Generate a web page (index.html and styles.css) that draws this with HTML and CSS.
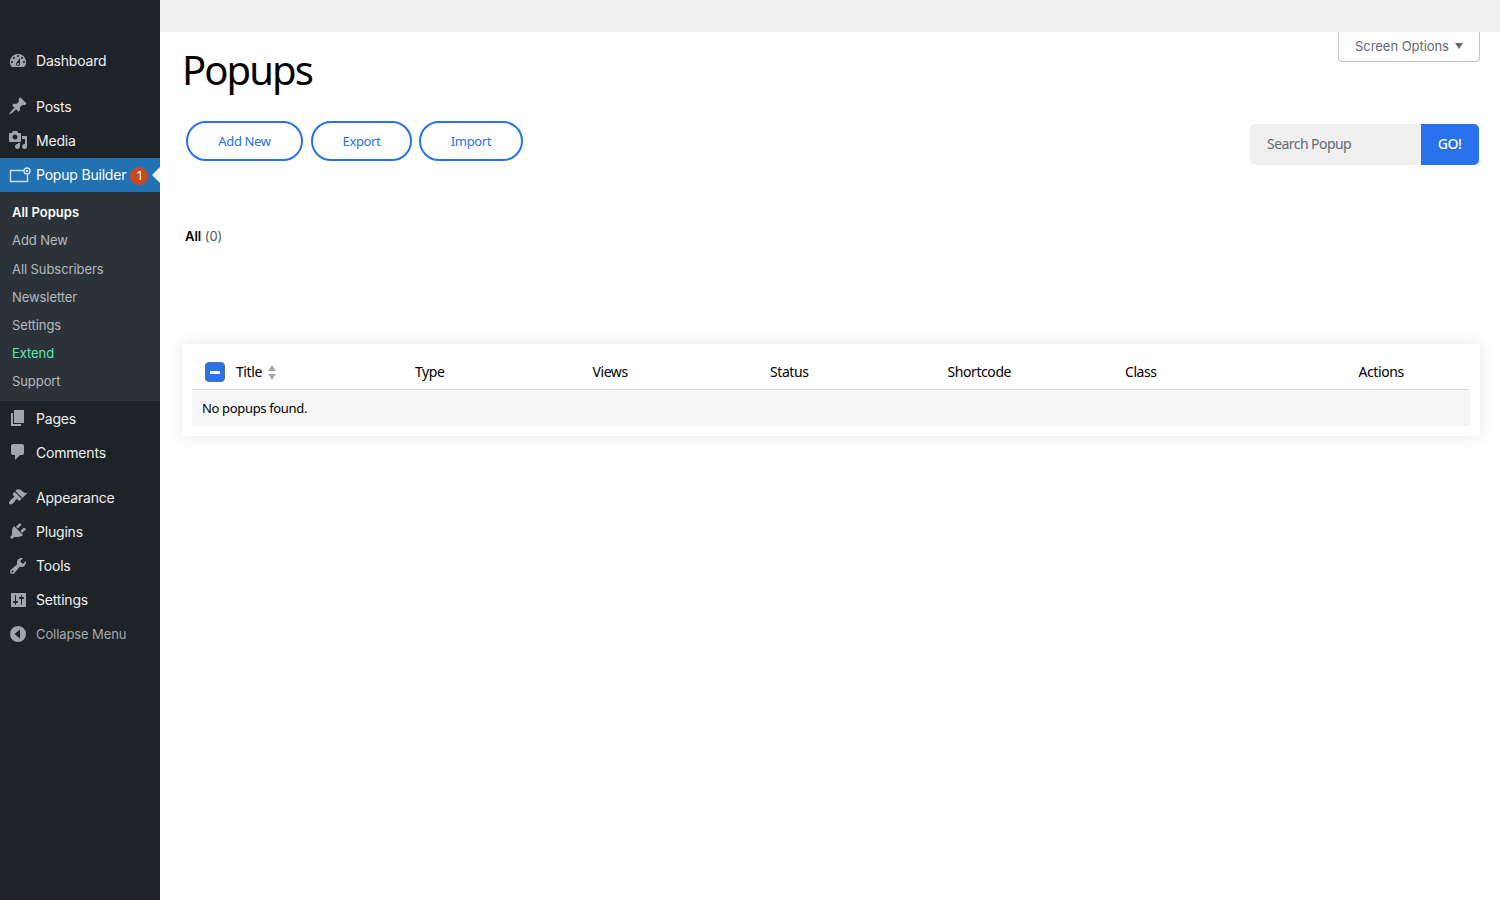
FILE: index.html
```html
<!DOCTYPE html>
<html lang="en">
<head>
<meta charset="utf-8">
<title>Popups</title>
<link rel="stylesheet" href="styles.css">
</head>
<body>
<div class="app">
<nav class="sidebar">
  <a class="item"><svg class="icon" viewBox="0 0 20 20"><path d="M3.76 16h12.48A7.998 7.998 0 0 0 10 3a7.998 7.998 0 0 0-6.24 13zM10 4c.55 0 1 .45 1 1s-.45 1-1 1-1-.45-1-1 .45-1 1-1zM6 6c.55 0 1 .45 1 1s-.45 1-1 1-1-.45-1-1 .45-1 1-1zm8 0c.55 0 1 .45 1 1s-.45 1-1 1-1-.45-1-1 .45-1 1-1zm-5.37 5.55L12 7v6c0 1.1-.9 2-2 2s-2-.9-2-2c0-.57.24-1.08.63-1.45zM4 10c.55 0 1 .45 1 1s-.45 1-1 1-1-.45-1-1 .45-1 1-1zm12 0c.55 0 1 .45 1 1s-.45 1-1 1-1-.45-1-1 .45-1 1-1zm-5 3c0-.55-.45-1-1-1s-1 .45-1 1 .45 1 1 1 1-.45 1-1z"/></svg><span class="label">Dashboard</span></a>
  <a class="item spaced"><svg class="icon" viewBox="0 0 20 20"><path d="M10.44 3.02l1.82-1.82 6.36 6.35-1.83 1.82c-1.05-.68-2.48-.57-3.41.36l-.75.75c-.92.93-1.04 2.35-.35 3.41l-1.83 1.82-2.41-2.41-2.8 2.79c-.42.42-3.38 2.71-3.8 2.29s1.86-3.39 2.28-3.81l2.79-2.79L4.1 9.36l1.83-1.82c1.05.69 2.48.57 3.4-.36l.75-.75c.93-.92 1.05-2.35.36-3.41z"/></svg><span class="label">Posts</span></a>
  <a class="item"><svg class="icon" viewBox="0 0 20 20"><path d="M13 11V4c0-.55-.45-1-1-1h-1.67L9 1H5L3.67 3H2c-.55 0-1 .45-1 1v7c0 .55.45 1 1 1h10c.55 0 1-.45 1-1zM7 4.5c1.38 0 2.5 1.12 2.5 2.5S8.38 9.5 7 9.5 4.5 8.38 4.5 7 5.62 4.5 7 4.5zM14 6h5v10.5c0 1.38-1.12 2.5-2.5 2.5S14 17.88 14 16.5s1.12-2.5 2.5-2.5c.17 0 .34.02.5.05V9h-3V6zm-4 8.05V13h2v3.5c0 1.38-1.12 2.5-2.5 2.5S7 17.88 7 16.5 8.12 14 9.5 14c.17 0 .34.02.5.05z"/></svg><span class="label">Media</span></a>
  <a class="item current"><svg class="icon builder" viewBox="0 0 22 16"><path d="M15 3.5H1.5v11h17V8" fill="none" stroke="currentColor" stroke-width="1.4"/><circle cx="18" cy="4" r="3" fill="none" stroke="currentColor" stroke-width="1.4"/><path d="M16.8 2.8l2.4 2.4m0-2.4l-2.4 2.4" stroke="currentColor"/></svg><span class="label">Popup Builder</span><span class="badge">1</span></a>
  <div class="submenu">
    <a class="sub active">All Popups</a>
    <a class="sub">Add New</a>
    <a class="sub">All Subscribers</a>
    <a class="sub">Newsletter</a>
    <a class="sub">Settings</a>
    <a class="sub extend">Extend</a>
    <a class="sub">Support</a>
  </div>
  <a class="item"><svg class="icon" viewBox="0 0 20 20"><path d="M6 15V2h10v13H6zm-1 1h8v2H3V5h2v11z"/></svg><span class="label">Pages</span></a>
  <a class="item"><svg class="icon" viewBox="0 0 20 20"><path d="M5 2h9c1.1 0 2 .9 2 2v7c0 1.1-.9 2-2 2h-2l-5 5v-5H5c-1.1 0-2-.9-2-2V4c0-1.1.9-2 2-2z"/></svg><span class="label">Comments</span></a>
  <a class="item spaced-late"><svg class="icon" viewBox="0 0 20 20"><path d="M14.48 11.06L7.41 3.99l1.5-1.5c.5-.56 2.3-.47 3.51.32 1.21.8 1.43 1.28 2.91 2.1 1.18.64 2.45 1.26 4.45.85zm-.71.71L6.7 4.7 4.93 6.47c-.39.39-.39 1.02 0 1.41l1.06 1.06c.39.39.39 1.03 0 1.42-.6.6-1.43 1.11-2.21 1.69-.35.26-.7.53-1.01.84C1.43 14.23.4 16.08 1.4 17.07c.99 1 2.84-.03 4.18-1.36.31-.31.58-.66.85-1.02.57-.78 1.08-1.61 1.69-2.21.39-.39 1.02-.39 1.41 0l1.06 1.06c.39.39 1.02.39 1.41 0z"/></svg><span class="label">Appearance</span></a>
  <a class="item"><svg class="icon" viewBox="0 0 20 20"><path d="M13.11 4.36L9.87 7.6 8 5.73l3.24-3.24c.35-.34 1.05-.2 1.56.32.52.51.66 1.21.31 1.55zm-8 1.77l.91-1.12 9.01 9.01-1.19.84c-.71.71-2.63 1.16-3.82 1.16H6.14L4.9 17.26c-.59.59-1.54.59-2.12 0-.59-.58-.59-1.53 0-2.12l1.24-1.24v-3.88c0-1.13.4-3.19 1.09-3.89zm7.26 3.97l3.24-3.24c.34-.35 1.04-.21 1.55.31.52.51.66 1.21.31 1.55l-3.24 3.25z"/></svg><span class="label">Plugins</span></a>
  <a class="item"><svg class="icon" viewBox="0 0 20 20"><path d="M16.68 9.77c-1.34 1.34-3.3 1.67-4.95.99l-5.41 6.52c-.99.99-2.59.99-3.58 0s-.99-2.59 0-3.57l6.52-5.42c-.68-1.65-.35-3.61.99-4.95 1.28-1.28 3.12-1.62 4.72-1.06l-2.89 2.89 2.82 2.82 2.86-2.87c.53 1.58.18 3.39-1.08 4.65zM3.81 16.21c.4.39 1.04.39 1.43 0 .4-.4.4-1.04 0-1.43-.39-.4-1.03-.4-1.43 0-.39.39-.39 1.03 0 1.43z"/></svg><span class="label">Tools</span></a>
  <a class="item"><svg class="icon" viewBox="0 0 20 20"><path d="M18 16V4c0-.55-.45-1-1-1H4c-.55 0-1 .45-1 1v12c0 .55.45 1 1 1h13c.55 0 1-.45 1-1zM8 11h1c.55 0 1 .45 1 1s-.45 1-1 1H8v1.5c0 .28-.22.5-.5.5s-.5-.22-.5-.5V13H6c-.55 0-1-.45-1-1s.45-1 1-1h1V5.5c0-.28.22-.5.5-.5s.5.22.5.5V11zm5-2h-1c-.55 0-1-.45-1-1s.45-1 1-1h1V5.5c0-.28.22-.5.5-.5s.5.22.5.5V7h1c.55 0 1 .45 1 1s-.45 1-1 1h-1v5.5c0 .28-.22.5-.5.5s-.5-.22-.5-.5V9z"/></svg><span class="label">Settings</span></a>
  <a class="item collapse"><svg class="icon" viewBox="0 0 20 20"><path fill-rule="evenodd" d="M10 2a8 8 0 1 0 0 16a8 8 0 1 0 0-16zM12 5.5v9L6.5 10z"/></svg><span class="label">Collapse Menu</span></a>
</nav>
<main class="main">
  <div class="topbar"></div>
  <div class="content">
    <header class="head">
      <h1 class="title">Popups</h1>
      <button class="screen-options">Screen Options <svg class="caret" viewBox="0 0 8 6"><path d="M0 0h8L4 6z"/></svg></button>
    </header>
    <div class="toolbar">
      <div class="actions">
        <button class="pill add">Add New</button>
        <button class="pill export">Export</button>
        <button class="pill import">Import</button>
      </div>
      <form class="search"><span class="field">Search Popup</span><span class="go">GO!</span></form>
    </div>
    <div class="filter"><b>All</b> <span>(0)</span></div>
    <section class="card">
      <div class="row">
        <div class="cell first"><span class="check"></span><span>Title</span><svg class="sort" viewBox="0 0 8 15"><path d="M0 6h8L4 0zM0 9h8l-4 6z"/></svg></div>
        <div class="cell">Type</div>
        <div class="cell">Views</div>
        <div class="cell">Status</div>
        <div class="cell">Shortcode</div>
        <div class="cell">Class</div>
        <div class="cell last">Actions</div>
      </div>
      <div class="empty">No popups found.</div>
    </section>
  </div>
</main>
</div>
</body>
</html>
```
FILE: styles.css
```css
* { box-sizing: border-box; }
body { margin: 0; font-family: "Noto Sans", "Open Sans", sans-serif; color: #000; background: #fff; }
button { font-family: inherit; }
.app { display: flex; height: 900px; overflow: hidden; }

.sidebar { width: 160px; flex: none; padding-top: 43.4px; background: #1d2327; font-family: Inter, sans-serif; border-bottom: 1px solid #241e24; }
.item { position: relative; display: flex; align-items: center; height: 34.3px; padding-left: 8px; color: #f0f0f1; font-size: 14px; letter-spacing: -0.2px; white-space: nowrap; }
.spaced { margin-top: 11.2px; }
.spaced-late { margin-top: 10.5px; }
.icon { width: 20px; height: 20px; margin-right: 8px; flex: none; fill: #a0a5aa; }
.current { height: 34px; margin-top: 0.4px; background: #2271b1; color: #fff; }
.current::after { content: ""; position: absolute; right: 0; top: 9px; border: 8px solid transparent; border-left-width: 0; border-right-color: #f0f0f1; }
.builder { width: 22px; height: 16px; margin: 0 5px 0 1px; color: #c9e0ff; }
.badge { width: 18px; height: 18px; margin: 2px 0 0 4px; border-radius: 50%; background: #ca4a1f; font-size: 12px; line-height: 18px; text-align: center; }
.submenu { height: 209px; padding-top: 6.4px; background: #2c3338; }
.sub { display: flex; align-items: center; height: 28.15px; padding-left: 12px; color: #b4b9be; font-size: 13px; letter-spacing: -0.08px; }
.active { color: #fff; font-weight: 600; letter-spacing: 0; }
.extend { color: #5ce8b5; }
.collapse { color: #a7aaad; font-size: 13px; letter-spacing: -0.1px; }

.main { flex: 1; min-width: 0; }
.topbar { height: 32px; background: #f0f0f0; }
.content { padding: 0 20px 0 22px; }
.head { display: flex; justify-content: space-between; align-items: flex-start; height: 89px; }
.title { margin: 10px 0 0; font-size: 40px; line-height: 56px; font-weight: 400; letter-spacing: -1.9px; }
.screen-options { display: flex; align-items: center; justify-content: center; gap: 6px; width: 142px; height: 30px; padding: 0 0 1px; background: #fff; border: 1px solid #c3c4c7; border-top: 0; border-radius: 0 0 4px 4px; color: #646970; font: 13px Inter, sans-serif; letter-spacing: -0.05px; }
.caret { width: 8px; height: 6px; fill: #646970; }
.toolbar { display: flex; justify-content: space-between; height: 105px; padding: 0 1px 0 4px; }
.actions { display: flex; gap: 8px; }
.pill { height: 40px; padding: 0; border: 2px solid #2872e8; border-radius: 20px; background: #fff; color: #2872e8; font-size: 13px; letter-spacing: -0.35px; }
.add { width: 117px; }
.export { width: 101px; }
.import { width: 104px; margin-left: -1px; }
.search { display: flex; height: 41px; margin-top: 3px; border-radius: 5px; overflow: hidden; line-height: 40px; font-size: 14px; }
.field { width: 171px; padding-left: 17px; background: #f0f0f0; color: #646970; letter-spacing: -0.55px; }
.go { width: 58px; padding-right: 1px; background: #2872eb; color: #fff; text-align: center; letter-spacing: -0.5px; font-weight: 500; }
.filter { height: 118px; padding-left: 3px; font: 13px/20px Inter, sans-serif; letter-spacing: -0.05px; color: #50575e; }
.filter b { color: #000; font-weight: 600; }
.card { height: 92px; padding: 10px; background: #fff; box-shadow: 0 0 15px rgba(0, 0, 0, 0.1); }
.row { display: grid; grid-template-columns: 213px repeat(4, 177.5px) 233.5px 1fr; height: 36px; border-bottom: 1px solid #dcdee0; font-size: 14px; letter-spacing: -0.42px; line-height: 36px; }
.cell { padding-left: 10px; }
.first { display: flex; align-items: center; padding-left: 13px; }
.check { display: flex; align-items: center; justify-content: center; width: 20px; height: 20px; margin-right: 11px; background: #2872eb; border: 1px solid #5b7085; border-radius: 4px; }
.check::after { content: ""; width: 10px; height: 3px; background: #fff; }
.sort { width: 8px; height: 15px; margin-left: 6px; fill: #a7aaad; }
.empty { height: 36px; padding-left: 10px; background: #f6f6f6; font-size: 13px; line-height: 36px; letter-spacing: -0.34px; }
```
